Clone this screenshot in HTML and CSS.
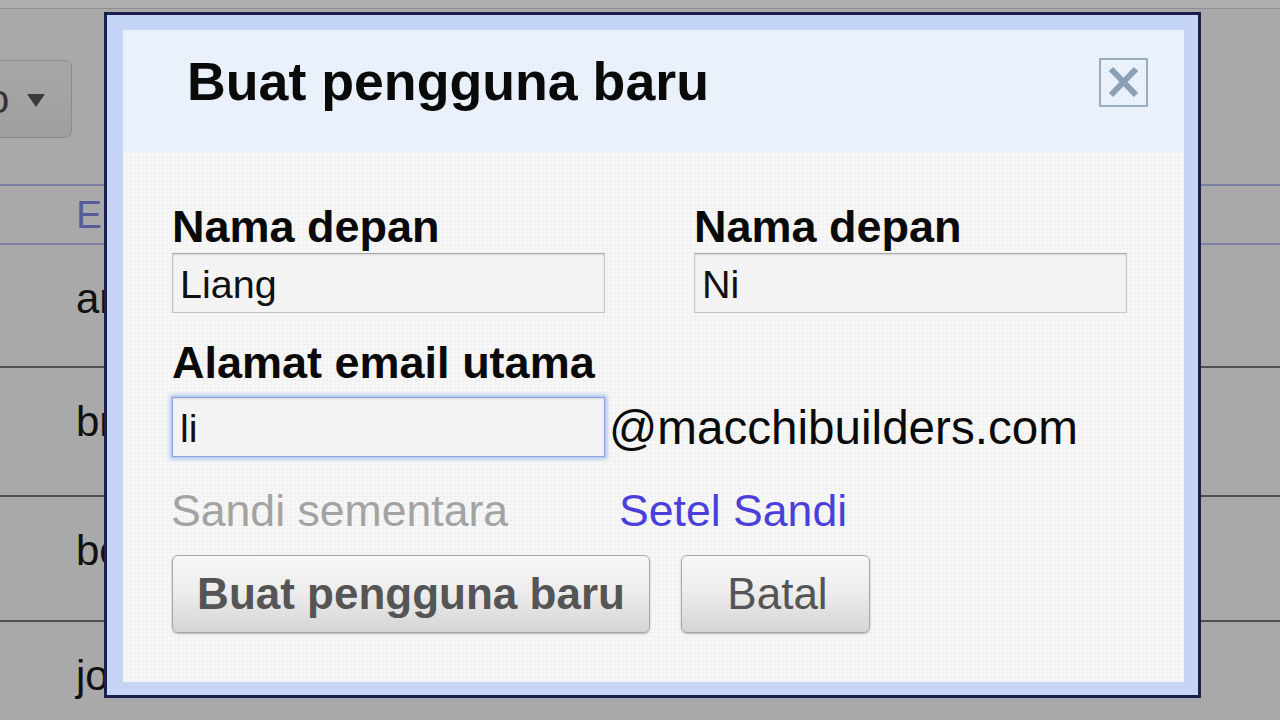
FILE: index.html
```html
<!DOCTYPE html>
<html lang="id">
<head>
<meta charset="utf-8">
<title>Buat pengguna baru</title>
<link rel="stylesheet" href="styles.css">
</head>
<body>
<div class="page">
  <div class="topbar"></div>
  <div class="toolbar">
    <div class="dropdown"><span class="dd-text">o</span>
      <svg class="dd-arrow" width="18" height="13" viewBox="0 0 18 13"><polygon points="0,0 18,0 9,13" fill="#3a3a3a"/></svg>
    </div>
  </div>
  <div class="thead"><span>Email</span></div>
  <div class="row row1"><span>ar</span></div>
  <div class="row row2"><span>br</span></div>
  <div class="row row3"><span>bo</span></div>
  <div class="row row4"><span>jo</span></div>
</div>

<div class="dialog">
  <div class="dialog-inner">
    <div class="dlg-header">
      <h1 class="dlg-title">Buat pengguna baru</h1>
      <div class="close-btn">
        <svg width="45" height="45" viewBox="0 0 45 45"><path d="M10 9 L35 35 M35 9 L10 35" stroke="#8aa0b7" stroke-width="6" stroke-linecap="butt"/></svg>
      </div>
    </div>
    <div class="dlg-body">
      <div class="name-row">
        <div class="field">
          <label class="lbl">Nama depan</label>
          <input class="txt" type="text" value="Liang">
        </div>
        <div class="field">
          <label class="lbl">Nama depan</label>
          <input class="txt" type="text" value="Ni">
        </div>
      </div>
      <label class="lbl lbl-email">Alamat email utama</label>
      <div class="email-row">
        <input class="txt txt-focus" type="text" value="li">
        <span class="domain">@macchibuilders.com</span>
      </div>
      <div class="pw-row">
        <span class="pw-label">Sandi sementara</span>
        <span class="pw-link">Setel Sandi</span>
      </div>
      <div class="btn-row">
        <button class="btn btn-primary">Buat pengguna baru</button>
        <button class="btn btn-cancel">Batal</button>
      </div>
    </div>
  </div>
</div>
</body>
</html>
```

FILE: styles.css
```css
* { box-sizing: border-box; }
html, body {
  margin: 0;
  padding: 0;
  width: 1280px;
  height: 720px;
  overflow: hidden;
  background: #a9a9a9;
  font-family: "Liberation Sans", Arial, sans-serif;
}

.page { width: 1280px; height: 720px; overflow: hidden; }

.topbar {
  height: 9px;
  background: #b0b0b0;
  border-bottom: 1px solid #8f8f8f;
}

.toolbar {
  height: 175px;
  padding-top: 51px;
}

.dropdown {
  margin-left: -40px;
  width: 112px;
  height: 78px;
  border: 1px solid #8b8b8b;
  border-radius: 7px;
  background: linear-gradient(#a7a7a7, #9f9f9f);
  display: flex;
  align-items: center;
  padding-left: 26px;
  gap: 18px;
}
.dd-text { font-size: 40px; color: #333; }
.dd-arrow { display: block; margin-top: 2px; }

.thead {
  height: 61px;
  border-top: 2px solid #7b7ea3;
  border-bottom: 2px solid #7f82a6;
  padding-left: 76px;
  display: flex;
  align-items: center;
  font-size: 39px;
  color: #565c9c;
}

.row {
  border-bottom: 2px solid #505050;
  padding-left: 76px;
  padding-top: 30px;
  font-size: 42px;
  line-height: 48px;
  color: #111;
}
.row1 { height: 123px; }
.row2 { height: 129px; }
.row3 { height: 125px; }
.row4 { height: 120px; border-bottom: none; }

/* Dialog */
.dialog {
  position: absolute;
  left: 104px;
  top: 12px;
  width: 1097px;
  height: 686px;
  border: 3px solid #1b1f4e;
  background: #c4d5f6;
  padding: 15px 14px 13px 16px;
}
.dialog-inner {
  height: 100%;
  display: flex;
  flex-direction: column;
}

.dlg-header {
  height: 122px;
  flex: none;
  background-color: #e7effb;
  background-image:
    linear-gradient(rgba(255,255,255,.18) 1px, transparent 1px),
    linear-gradient(90deg, rgba(255,255,255,.18) 1px, transparent 1px);
  background-size: 4px 4px;
  display: flex;
  justify-content: space-between;
  align-items: flex-start;
  padding: 0 36px 0 64px;
}
.dlg-title {
  margin: 21px 0 0;
  font-size: 53.7px;
  line-height: 60px;
  font-weight: bold;
  color: #0a0a0a;
}
.close-btn {
  margin-top: 28px;
  width: 49px;
  height: 49px;
  border: 2px solid #9aabbd;
  display: flex;
  align-items: center;
  justify-content: center;
}
.close-btn svg { display: block; }

.dlg-body {
  flex: 1;
  background-color: #f7f7f7;
  background-image:
    linear-gradient(rgba(0,0,0,.018) 1px, transparent 1px),
    linear-gradient(90deg, rgba(0,0,0,.018) 1px, transparent 1px);
  background-size: 4px 4px;
  padding: 50px 0 0 49px;
}

.name-row {
  display: flex;
  gap: 89px;
}
.field {
  width: 433px;
  display: flex;
  flex-direction: column;
}
.lbl {
  display: block;
  font-size: 45px;
  line-height: 50px;
  font-weight: bold;
  color: #0a0a0a;
  margin-bottom: 1px;
}
.lbl-email {
  margin-top: 25px;
  margin-bottom: 9px;
}

.txt {
  display: block;
  width: 433px;
  height: 60px;
  margin: 0;
  padding: 3px 0 0 7px;
  font-family: "Liberation Sans", Arial, sans-serif;
  font-size: 39.5px;
  color: #111;
  background: #f3f3f3;
  border: 1px solid #c4c4c4;
  border-top-color: #a8a8a8;
  box-shadow: inset 0 1px 2px rgba(0,0,0,.12);
  border-radius: 0;
  outline: none;
}
.txt-focus {
  border-color: #8aa5da;
  box-shadow: 0 0 4px 2px #a9c0ee, inset 0 1px 2px rgba(0,0,0,.10);
}

.email-row {
  display: flex;
  align-items: center;
  gap: 4px;
}
.domain {
  font-size: 47.6px;
  line-height: 56px;
  margin-top: 2px;
  color: #0a0a0a;
}

.pw-row {
  margin-top: 29px;
  margin-left: -1px;
  display: flex;
  font-size: 44.6px;
  line-height: 50px;
}
.pw-label { width: 448px; color: #a3a3a3; }
.pw-link { color: #4b3fdb; }

.btn-row {
  margin-top: 19px;
  display: flex;
  gap: 31px;
}
.btn {
  height: 78px;
  margin: 0;
  padding: 0;
  font-family: "Liberation Sans", Arial, sans-serif;
  font-size: 44px;
  color: #555;
  border: 1px solid #a6a6a6;
  border-radius: 6px;
  background: linear-gradient(#f7f7f7 0%, #eeeeee 45%, #d5d5d5 100%);
  box-shadow: 0 1px 2px rgba(0,0,0,.25);
}
.btn-primary { width: 478px; font-weight: bold; }
.btn-cancel { width: 189px; padding-left: 4px; }
```
